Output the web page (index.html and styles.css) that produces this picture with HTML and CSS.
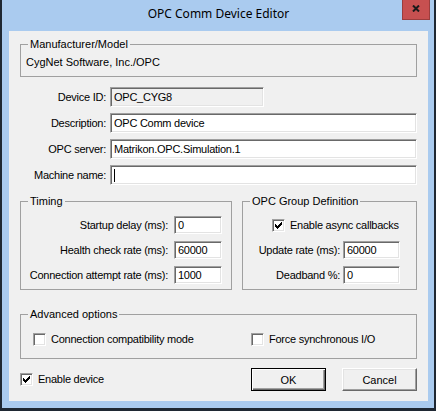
FILE: index.html
```html
<!DOCTYPE html>
<html lang="en">
<head>
    <meta charset="UTF-8">
    <meta name="viewport" content="width=device-width, initial-scale=1.0">
    <title>OPC Comm Device Editor</title>
    <link rel="stylesheet" href="styles.css">
</head>
<body>
    <div class="window">
        <!-- Title bar -->
        <div class="titlebar">
            <span></span>
            <span class="title">OPC Comm Device Editor</span>
            <div class="close">
                <svg width="8" height="7" viewBox="0 0 8 7">
                    <path d="M1 0.5L7 6.5M7 0.5L1 6.5" stroke="#1a1a1a" stroke-width="2"/>
                </svg>
            </div>
        </div>

        <div class="client">
            <fieldset class="group maker">
                <legend>Manufacturer/Model</legend>
                <div class="maker-name">CygNet Software, Inc./OPC</div>
            </fieldset>

            <div class="form">
                <span class="label">Device ID:</span>
                <div class="field disabled short">OPC_CYG8</div>
                <span class="label">Description:</span>
                <div class="field">OPC Comm device</div>
                <span class="label">OPC server:</span>
                <div class="field">Matrikon.OPC.Simulation.1</div>
                <span class="label">Machine name:</span>
                <div class="field"><span class="caret"></span></div>
            </div>

            <div class="panels">
                <fieldset class="group timing">
                    <legend>Timing</legend>
                    <div class="rows">
                        <span class="label">Startup delay (ms):</span>
                        <div class="field">0</div>
                        <span class="label">Health check rate (ms):</span>
                        <div class="field">60000</div>
                        <span class="label">Connection attempt rate (ms):</span>
                        <div class="field">1000</div>
                    </div>
                </fieldset>

                <fieldset class="group opc">
                    <legend>OPC Group Definition</legend>
                    <div class="rows">
                        <div class="check wide">
                            <span class="box">
                                <svg width="7" height="7" viewBox="0 0 7 7"><path d="M6 0h1v1h-1zM5 1h2v1h-2zM0 2h1v1h-1zM4 2h3v1h-3zM0 3h2v1h-2zM3 3h3v1h-3zM0 4h5v1h-5zM1 5h3v1h-3zM2 6h1v1h-1z"/></svg>
                            </span>
                            Enable async callbacks
                        </div>
                        <span class="label">Update rate (ms):</span>
                        <div class="field">60000</div>
                        <span class="label">Deadband %:</span>
                        <div class="field">0</div>
                    </div>
                </fieldset>
            </div>

            <fieldset class="group advanced">
                <legend>Advanced options</legend>
                <div class="options">
                    <div class="check first"><span class="box"></span>Connection compatibility mode</div>
                    <div class="check"><span class="box"></span>Force synchronous I/O</div>
                </div>
            </fieldset>

            <div class="footer">
                <div class="check">
                    <span class="box">
                        <svg width="7" height="7" viewBox="0 0 7 7"><path d="M6 0h1v1h-1zM5 1h2v1h-2zM0 2h1v1h-1zM4 2h3v1h-3zM0 3h2v1h-2zM3 3h3v1h-3zM0 4h5v1h-5zM1 5h3v1h-3zM2 6h1v1h-1z"/></svg>
                    </span>
                    Enable device
                </div>
                <div class="buttons">
                    <button class="default">OK</button>
                    <button>Cancel</button>
                </div>
            </div>
        </div>
    </div>
</body>
</html>
```

FILE: styles.css
```css
body {
    margin: 0;
    background-color: #1f2833;
    font-family: "Liberation Sans", Arial, sans-serif;
    font-size: 11px;
    letter-spacing: -0.25px;
    color: #000;
}

.window {
    width: 432px;
    height: 408px;
    margin-left: 2px;
    padding: 0 6px 7px 7px;
    box-sizing: border-box;
    background-color: #aacbef;
    display: flex;
    flex-direction: column;
}

/* Title bar */
.titlebar {
    height: 31px;
    display: grid;
    grid-template-columns: 1fr auto 1fr;
}

.title {
    font-family: "Noto Sans", sans-serif;
    font-size: 12px;
    line-height: 16px;
    letter-spacing: 0;
    padding-top: 6px;
}

.close {
    justify-self: end;
    width: 28px;
    height: 20px;
    margin-right: -2px;
    box-sizing: border-box;
    background-color: #c75050;
    border: 1px solid #9b3d3d;
    border-top: none;
    display: flex;
    justify-content: center;
    padding-top: 5px;
}

/* Client area */
.client {
    flex: 1;
    background-color: #f0f0f0;
    padding: 7px 11px 10px 11px;
    display: flex;
    flex-direction: column;
}

.group {
    margin: 0;
    padding: 0;
    min-width: 0;
    box-sizing: border-box;
    border: 1px solid #a0a0a0;
}

.group legend {
    margin-left: 7px;
    padding: 0 2px;
    line-height: 13px;
    letter-spacing: 0;
}

.maker-name {
    padding: 5px 0 7px 5px;
    line-height: 13px;
    letter-spacing: 0;
}

.label {
    text-align: right;
    white-space: nowrap;
}

/* Sunken edit box */
.field {
    box-sizing: border-box;
    height: 20px;
    line-height: 18px;
    padding-left: 3px;
    background-color: #fff;
    border: 1px solid;
    border-color: #a0a0a0 #fff #fff #a0a0a0;
    box-shadow: inset 1px 1px #696969, inset -1px -1px #e3e3e3;
    white-space: nowrap;
    overflow: hidden;
}

.field.disabled {
    background-color: #f0f0f0;
}

.caret {
    display: inline-block;
    width: 1px;
    height: 13px;
    background-color: #000;
    vertical-align: -3px;
}

.form {
    display: grid;
    grid-template-columns: 86px 307px;
    column-gap: 4px;
    row-gap: 6px;
    margin-top: 10px;
}

.form .label {
    line-height: 20px;
}

.form .short {
    width: 154px;
}

.panels {
    display: flex;
    gap: 10px;
    margin-top: 10px;
}

.timing {
    width: 212px;
}

.opc {
    width: 175px;
}

.rows {
    display: grid;
    row-gap: 7px;
    padding: 8px 0 5px 0;
}

.rows .label {
    line-height: 18px;
}

.rows .field {
    height: 18px;
    line-height: 16px;
}

.timing .rows {
    grid-template-columns: 147px 48px;
    column-gap: 6px;
}

.opc .rows {
    grid-template-columns: 97px 57px;
    column-gap: 3px;
}

.opc .wide {
    grid-column: span 2;
    padding-left: 29px;
    height: 18px;
}

/* Checkboxes */
.check {
    display: flex;
    align-items: center;
    gap: 5px;
    line-height: 13px;
    white-space: nowrap;
}

.box {
    width: 13px;
    height: 13px;
    box-sizing: border-box;
    background-color: #fff;
    border: 1px solid;
    border-color: #a0a0a0 #fff #fff #a0a0a0;
    box-shadow: inset 1px 1px #696969, inset -1px -1px #e3e3e3;
    display: flex;
    align-items: center;
    justify-content: center;
    flex-shrink: 0;
}

.advanced {
    margin-top: 18px;
}

.options {
    display: flex;
    padding: 12px 0 12px 12px;
}

.options .first {
    width: 218px;
}

/* Bottom row */
.footer {
    display: flex;
    align-items: center;
    justify-content: space-between;
    margin-top: 9px;
}

.buttons {
    display: flex;
    gap: 16px;
}

button {
    width: 75px;
    height: 23px;
    padding: 0;
    font-family: inherit;
    font-size: 11px;
    color: #000;
    background-color: #f0f0f0;
    border: 1px solid;
    border-color: #fff #696969 #696969 #fff;
    box-shadow: inset -1px -1px #a0a0a0, inset 1px 1px #e3e3e3;
}

button.default {
    border-color: #000;
    box-shadow: inset 1px 1px #fff, inset -1px -1px #696969, inset -2px -2px #a0a0a0;
}
```
